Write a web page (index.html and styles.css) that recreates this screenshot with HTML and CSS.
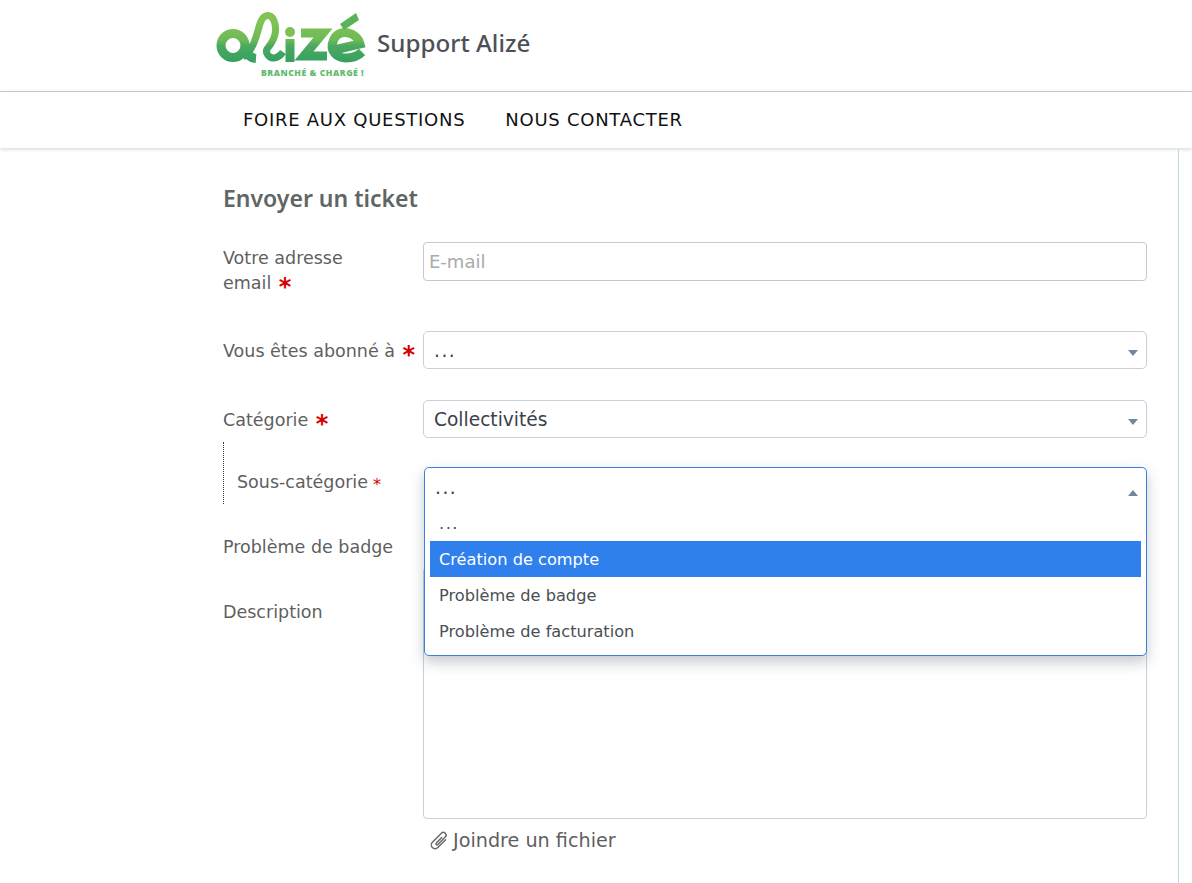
FILE: index.html
```html
<!DOCTYPE html>
<html lang="fr">
<head>
  <meta charset="UTF-8">
  <title>Support Alizé</title>
  <link rel="stylesheet" href="styles.css">
</head>
<body>
  <header class="top">
    <div class="logo">
      <svg width="162" height="78" viewBox="215 4 162 78">
        <defs>
          <linearGradient id="vert" gradientUnits="userSpaceOnUse" x1="0" y1="22" x2="0" y2="62">
            <stop offset="0" stop-color="#82c353"/>
            <stop offset="0.45" stop-color="#6dba58"/>
            <stop offset="0.6" stop-color="#4aa95f"/>
            <stop offset="1" stop-color="#36a062"/>
          </linearGradient>
        </defs>
        <g fill="none" stroke="url(#vert)" stroke-width="9">
          <circle cx="233" cy="45.500" r="12"/>
          <path d="M245 44C246 54 250 58 256 58.500"/>
          <path stroke-width="7" d="M243 57C252 52 256 38 259 27C261 19 264 15.500 268 15.500C273 15.500 276 23 275.500 31C275 40 270 45 267 49C265 53 269 58.500 274 58C278 57.500 281 55 283 52"/>
          <path d="M290 39V62"/>
          <path d="M301 33H323L304 56H327"/>
          <path d="M334 50L360 44C357 32 340 28 334 39C328 52 338 58 346 58C352 58 358 56 362 52"/>
        </g>
        <circle cx="290" cy="32" r="5" fill="#7cc155"/>
        <path d="M340 24L356 13L359 20L344 30Z" fill="#5cb259"/>
        <text class="tagline" x="261" y="75.500">BRANCHÉ &amp; CHARGÉ !</text>
      </svg>
    </div>
    <span class="site-name">Support Alizé</span>
  </header>

  <nav class="menu">
    <a href="#">Foire aux questions</a>
    <a href="#">Nous contacter</a>
  </nav>

  <main class="content">
    <h1>Envoyer un ticket</h1>
    <form class="ticket">
      <div class="row row-email">
        <label>Votre adresse<br>email <span class="req">*</span></label>
        <div class="field"><input type="text" placeholder="E-mail"></div>
      </div>
      <div class="row row-abo">
        <label>Vous êtes abonné à <span class="req">*</span></label>
        <div class="field"><div class="select"><span class="dots">...</span><i class="arrow"></i></div></div>
      </div>
      <div class="row row-cat">
        <label>Catégorie <span class="req">*</span></label>
        <div class="field"><div class="select">Collectivités<i class="arrow"></i></div></div>
      </div>
      <div class="row row-sub">
        <label>Sous-catégorie<span class="req small">*</span></label>
        <div class="field">
          <div class="select open"><span class="dots">...</span><i class="arrow up"></i>
            <ul class="options">
              <li><span class="dots">...</span></li>
              <li class="active">Création de compte</li>
              <li>Problème de badge</li>
              <li>Problème de facturation</li>
            </ul>
          </div>
        </div>
      </div>
      <div class="row row-badge">
        <label>Problème de badge</label>
      </div>
      <div class="row row-desc">
        <label>Description</label>
        <div class="field">
          <div class="textarea"></div>
          <a class="attach" href="#">
            <svg width="22" height="22" viewBox="0 0 20 20" fill="none" stroke="#666" stroke-width="1.300" stroke-linecap="round" stroke-linejoin="round"><path transform="rotate(45 10 10)" d="M13.500 5V15a3.500 3.500 0 0 1-7 0V3.500a2.500 2.500 0 0 1 5 0V13a1 1 0 0 1-2 0V6"/></svg>
            Joindre un fichier
          </a>
        </div>
      </div>
    </form>
  </main>
  <div class="side-line"></div>
</body>
</html>
```

FILE: styles.css
```css
* {
  box-sizing: border-box;
}
html, body {
  height: 100%;
}
body {
  margin: 0;
  overflow: hidden;
  font-family: "DejaVu Sans", sans-serif;
  font-size: 17.500px;
  color: #5f5f5f;
  background: #fff;
}
.top {
  height: 92px;
  padding-left: 215px;
  display: flex;
  align-items: flex-start;
  border-bottom: 1px solid #c9d2d8;
}
.logo {
  width: 162px;
  height: 78px;
  margin-top: 4px;
}
.tagline {
  font-family: "Open Sans", sans-serif;
  font-size: 8.600px;
  font-weight: 800;
  letter-spacing: 0.55px;
  fill: #62bb6d;
}
.site-name {
  margin-top: 26px;
  font-family: "Noto Sans", sans-serif;
  font-size: 24.200px;
  line-height: 34px;
  font-weight: 500;
  color: #4d5157;
}
.menu {
  height: 56px;
  padding: 0 0 2px 243px;
  display: flex;
  gap: 40px;
  align-items: center;
  box-shadow: 0 1px 4px rgba(0, 0, 0, 0.18);
}
.menu a {
  font-size: 18px;
  letter-spacing: 0.73px;
  text-transform: uppercase;
  text-decoration: none;
  color: #111;
}
.content {
  width: 924px;
  margin-left: 223px;
  padding-top: 33px;
}
h1 {
  margin: 0 0 27px;
  font-family: "Noto Sans", sans-serif;
  font-size: 23px;
  line-height: 34px;
  font-weight: 600;
  color: #5f6664;
}
.row {
  display: flex;
}
.row label {
  flex: 0 0 200px;
  line-height: 25px;
}
.field {
  flex: 1;
}
.row-email {
  height: 89px;
}
.row-email label {
  padding-top: 4px;
}
.row-abo {
  height: 69px;
}
.row-abo label {
  padding-top: 8px;
}
.row-cat {
  height: 42px;
}
.row-cat label {
  padding-top: 8px;
}
.row-sub {
  height: 62px;
  margin-bottom: 29px;
  border-left: 1px dotted #333;
}
.row-sub label {
  flex: 0 0 200px;
  padding: 28px 0 0 13px;
}
.row-sub .field {
  padding-top: 25px;
}
.row-badge {
  height: 65px;
}
.row-badge label,
.row-desc label {
  padding-top: 2px;
}
.req {
  font-size: 24px;
  font-weight: 700;
  line-height: 10px;
  color: #d80000;
  vertical-align: -6px;
  margin-left: 2px;
}
.req.small {
  font-size: 16px;
  font-weight: 400;
  vertical-align: -2px;
  margin-left: 5px;
}
input {
  display: block;
  width: 100%;
  height: 39px;
  padding: 0 5px;
  border: 1px solid #c8c8c8;
  border-radius: 4px;
  font: inherit;
  font-size: 18px;
}
input::placeholder {
  color: #aaa;
}
.select {
  position: relative;
  height: 38px;
  padding-left: 10px;
  border: 1px solid #c5d1dd;
  border-radius: 5px;
  font-size: 18.600px;
  line-height: 38px;
  color: #3a4148;
}
.dots {
  letter-spacing: 1.500px;
}
.arrow {
  position: absolute;
  top: 18px;
  right: 8px;
  border-left: 5.500px solid transparent;
  border-right: 5.500px solid transparent;
  border-top: 6px solid #73879c;
}
.arrow.up {
  border-top: 0;
  border-bottom: 6px solid #73879c;
  top: 22px;
}
.select.open {
  z-index: 2;
  height: 189px;
  border-color: #3a80e0;
  line-height: 40px;
  background: #fff;
  box-shadow: 0 6px 14px rgba(40, 60, 80, 0.28);
}
.options {
  list-style: none;
  margin: 0 5px;
  padding: 0;
  font-size: 16.200px;
  line-height: 38px;
  position: absolute;
  top: 37px;
  left: 0;
  right: 0;
}
.options li {
  height: 36px;
  padding-left: 9px;
  color: #4a4f55;
}
.options li.active {
  background: #2f80ed;
  color: #fff;
}
.textarea {
  height: 252px;
  margin-top: -31px;
  border: 1px solid #c5d1dd;
  border-radius: 4px;
}
.attach {
  display: flex;
  align-items: center;
  gap: 3px;
  margin: 9px 0 0 5px;
  font-size: 19.200px;
  line-height: 26px;
  text-decoration: none;
  color: #5f5f5f;
}
.side-line {
  position: absolute;
  top: 149px;
  bottom: 0;
  left: 1178px;
  width: 1px;
  background: #b5dde4;
}
```
